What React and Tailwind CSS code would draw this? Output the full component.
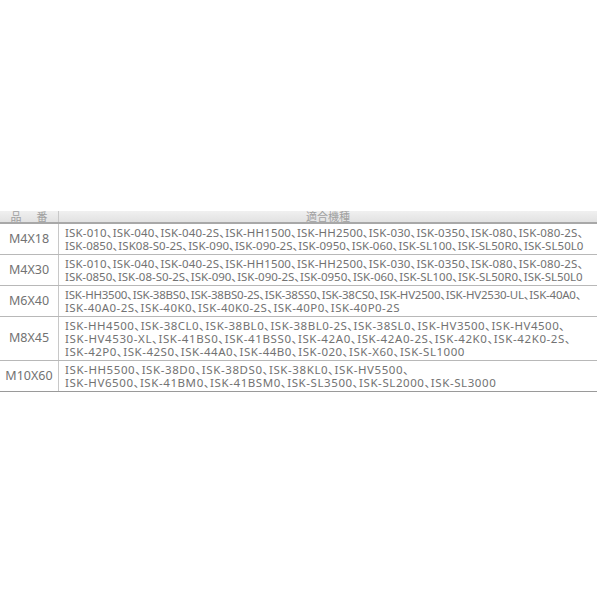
import React from 'react';

// each line carries its own tracking so the line ends land where the scan shows them
const rows = [
  {
    size: 'M4X18',
    lines: [
      ['ISK-010、ISK-040、ISK-040-2S、ISK-HH1500、ISK-HH2500、ISK-030、ISK-0350、ISK-080、ISK-080-2S、', 'tracking-[0.15px]'],
      ['ISK-0850、ISK08-S0-2S、ISK-090、ISK-090-2S、ISK-0950、ISK-060、ISK-SL100、ISK-SL50R0、ISK-SL50L0', 'tracking-[0.03px]'],
    ],
  },
  {
    size: 'M4X30',
    lines: [
      ['ISK-010、ISK-040、ISK-040-2S、ISK-HH1500、ISK-HH2500、ISK-030、ISK-0350、ISK-080、ISK-080-2S、', 'tracking-[0.15px]'],
      ['ISK-0850、ISK-08-S0-2S、ISK-090、ISK-090-2S、ISK-0950、ISK-060、ISK-SL100、ISK-SL50R0、ISK-SL50L0', 'tracking-[-0.02px]'],
    ],
  },
  {
    size: 'M6X40',
    lines: [
      ['ISK-HH3500、ISK-38BS0、ISK-38BS0-2S、ISK-38SS0、ISK-38CS0、ISK-HV2500、ISK-HV2530-UL、ISK-40A0、', 'tracking-[-0.22px]'],
      ['ISK-40A0-2S、ISK-40K0、ISK-40K0-2S、ISK-40P0、ISK-40P0-2S', 'tracking-[0.43px]'],
    ],
  },
  {
    size: 'M8X45',
    lines: [
      ['ISK-HH4500、ISK-38CL0、ISK-38BL0、ISK-38BL0-2S、ISK-38SL0、ISK-HV3500、ISK-HV4500、', 'tracking-[0.5px]'],
      ['ISK-HV4530-XL、ISK-41BS0、ISK-41BSS0、ISK-42A0、ISK-42A0-2S、ISK-42K0、ISK-42K0-2S、', 'tracking-[0.6px]'],
      ['ISK-42P0、ISK-42S0、ISK-44A0、ISK-44B0、ISK-020、ISK-X60、ISK-SL1000', 'tracking-[0.53px]'],
    ],
  },
  {
    size: 'M10X60',
    lines: [
      ['ISK-HH5500、ISK-38D0、ISK-38DS0、ISK-38KL0、ISK-HV5500、', 'tracking-[0.59px]'],
      ['ISK-HV6500、ISK-41BM0、ISK-41BSM0、ISK-SL3500、ISK-SL2000、ISK-SL3000', 'tracking-[0.58px]'],
    ],
  },
];

const App = () => {
  return (
    <div
      className="w-[600px] h-[600px] bg-white pt-[211px] text-[#727272] [font-feature-settings:'palt']"
      style={{ fontFamily: '"Noto Sans", "Noto Sans CJK JP", sans-serif' }}
    >
      <div className="w-[597px]">
        {/* header */}
        <div className="flex h-[13px] bg-gradient-to-b from-[#f0f0f0] to-[#e2e2e2] border-b-2 border-[#a8a8a8] text-[#a0a0a0] text-[11px] leading-[11px]">
          <div className="w-[59px] flex justify-center gap-[15px] border-r border-[#c8c8c8]">
            <span>品</span>
            <span>番</span>
          </div>
          <div className="flex-1 flex justify-center">適合機種</div>
        </div>

        {/* rows */}
        {rows.map((row, i) => (
          <div
            key={row.size}
            className={
              'flex border-b ' +
              (i === rows.length - 1 ? 'border-[#9a9a9a]' : 'border-[#b8b8b8]')
            }
          >
            <div className="w-[59px] shrink-0 flex items-center justify-center border-r border-[#c8c8c8] text-[12.5px]">
              {row.size}
            </div>
            <div className="flex-1 pl-[6px] py-[2px] text-[11.5px] leading-[13px]">
              {row.lines.map(([line, track], j) => (
                <div key={j} className={'whitespace-nowrap ' + track}>
                  {line}
                </div>
              ))}
            </div>
          </div>
        ))}
      </div>
    </div>
  );
};

export default App;
